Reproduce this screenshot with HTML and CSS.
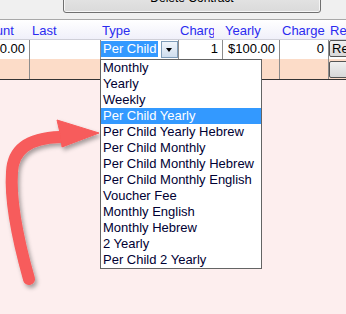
FILE: index.html
```html
<!DOCTYPE html>
<html lang="en">
<head>
    <meta charset="UTF-8">
    <meta name="viewport" content="width=device-width, initial-scale=1.0">
    <title>Contract charges</title>
    <link rel="stylesheet" href="styles.css">
</head>
<body>
    <div class="topbar">
        <button class="btn-delete">Delete Contract</button>
    </div>
    <div class="charges">
        <div class="row head">
            <div class="cell"><span>Amount</span></div>
            <div class="cell"><span>Last</span></div>
            <div class="cell"><span>Type</span></div>
            <div class="cell"><span>Charge</span></div>
            <div class="cell"><span>Yearly</span></div>
            <div class="cell"><span>Charge</span></div>
            <div class="cell"><span>Remove</span></div>
        </div>
        <div class="row data">
            <div class="cell num">100.00</div>
            <div class="cell"></div>
            <div class="cell type">
                <div class="select">
                    <span class="sel-text">Per Child</span>
                    <span class="sel-arrow"></span>
                </div>
                <ul class="dropdown">
                    <li>Monthly</li>
                    <li>Yearly</li>
                    <li>Weekly</li>
                    <li class="active">Per Child Yearly</li>
                    <li>Per Child Yearly Hebrew</li>
                    <li>Per Child Monthly</li>
                    <li>Per Child Monthly Hebrew</li>
                    <li>Per Child Monthly English</li>
                    <li>Voucher Fee</li>
                    <li>Monthly English</li>
                    <li>Monthly Hebrew</li>
                    <li>2 Yearly</li>
                    <li>Per Child 2 Yearly</li>
                </ul>
            </div>
            <div class="cell num">1</div>
            <div class="cell num">$100.00</div>
            <div class="cell num">0</div>
            <div class="cell btn-cell"><button class="btn-row">Remove</button></div>
        </div>
        <div class="row alt">
            <div class="cell"></div>
            <div class="cell"></div>
            <div class="cell"></div>
            <div class="cell"></div>
            <div class="cell"></div>
            <div class="cell"></div>
            <div class="cell btn-cell low"><button class="btn-row">&nbsp;</button></div>
        </div>
    </div>

    <!-- annotation arrow -->
    <svg class="arrow" width="110" height="300" viewBox="0 0 110 300">
        <defs>
            <filter id="shadow" x="-20%" y="-20%" width="140%" height="140%">
                <feDropShadow dx="2" dy="3" stdDeviation="2" flood-color="#000" flood-opacity="0.35"/>
            </filter>
        </defs>
        <g filter="url(#shadow)" fill="#f75b5b" stroke="#f75b5b">
            <path d="M29 279 C18 240, 10 200, 12 172 C13 150, 28 138, 60 137" fill="none" stroke-width="12" stroke-linecap="round"/>
            <path d="M57 120 L99 133 L62 147 Q61 134 57 120 Z" stroke-width="1" stroke-linejoin="round"/>
        </g>
    </svg>
</body>
</html>
```

FILE: styles.css
```css
html, body {
    margin: 0;
    width: 346px;
    height: 314px;
    overflow: hidden;
}
body {
    font-family: 'Liberation Sans', Arial, sans-serif;
    font-size: 13px;
    background: #fdeeee;
    position: relative;
}
.topbar {
    display: flex;
    height: 19px;
    padding-left: 63px;
    background: #f0f0f0;
    border-bottom: 1px solid #a8a8a8;
    overflow: hidden;
}
.btn-delete {
    width: 258px;
    height: 30px;
    margin-top: -17px;
    font-family: inherit;
    font-size: 12px;
    line-height: 15px;
    color: #000;
    background: linear-gradient(#ececec, #dadada);
    border: 1px solid #707070;
    border-radius: 3px;
    box-shadow: inset 0 0 0 1px #f6f6f6;
    padding: 0;
}
.charges {
    margin-left: -34px;
    width: 400px;
}
.row {
    display: grid;
    grid-template-columns: 63px 71px 78px 44px 57px 49px 38px;
}
.cell {
    box-sizing: border-box;
    overflow: hidden;
    white-space: nowrap;
    line-height: 15px;
}
.head {
    height: 20px;
    background: linear-gradient(#ffffff, #f0f0fa);
    border-bottom: 1px solid #cfcfd8;
    box-sizing: border-box;
}
.head .cell {
    color: #2b2bf0;
    padding: 3px 0 0 3px;
}
.head .cell span {
    display: block;
    overflow: hidden;
}
.head .cell:nth-child(3),
.head .cell:nth-child(4),
.head .cell:nth-child(7) {
    padding-left: 2px;
}
/* the first "Charge" header is cut short in its narrow column */
.head .cell:nth-child(4) {
    padding-right: 8px;
}
.data {
    height: 19px;
    background: #fff;
}
.data .cell {
    padding-top: 1px;
    color: #000;
}
.data .cell + .cell,
.alt .cell + .cell {
    border-left: 1px solid #8c8c8c;
}
.num {
    text-align: right;
    padding-right: 4px;
}
.alt {
    height: 21px;
    background: #fcdcc8;
    border-bottom: 1px solid #333;
    box-sizing: border-box;
}
.type {
    position: relative;
    overflow: visible;
    padding-left: 0;
}
.select {
    display: flex;
    align-items: flex-start;
}
.sel-text {
    width: 57px;
    height: 16px;
    line-height: 16px;
    padding-left: 2px;
    box-sizing: border-box;
    background: #3399ff;
    color: #fff;
}
.sel-arrow {
    position: relative;
    width: 17px;
    height: 17px;
    margin-left: 3px;
    box-sizing: border-box;
    border: 1px solid #7f9db9;
    background: linear-gradient(#f0f5fb, #cfdeee);
}
.sel-arrow::after {
    content: "";
    position: absolute;
    left: 4px;
    top: 6px;
    border-left: 3.5px solid transparent;
    border-right: 3.5px solid transparent;
    border-top: 4px solid #000;
}
.dropdown {
    position: absolute;
    left: -1px;
    top: 19px;
    z-index: 2;
    width: 162px;
    margin: 0;
    padding: 0;
    list-style: none;
    box-sizing: border-box;
    background: #fff;
    border: 1px solid #646464;
}
.dropdown li {
    height: 16px;
    line-height: 16px;
    padding-left: 2px;
    color: #000033;
}
.dropdown li.active {
    background: #3399ff;
    color: #fff;
}
.btn-cell {
    padding: 0 !important;
}
.btn-cell.low {
    padding-top: 2px !important;
}
.btn-row {
    display: block;
    width: 40px;
    height: 17px;
    padding: 0 0 0 2px;
    text-align: left;
    font-family: inherit;
    font-size: 13px;
    line-height: 15px;
    color: #000;
    background: linear-gradient(#f0f0f0, #d8d8d8);
    border: 1px solid #555;
    border-radius: 2px;
    overflow: hidden;
}
.arrow {
    position: absolute;
    left: 0;
    top: 0;
    pointer-events: none;
}
```
